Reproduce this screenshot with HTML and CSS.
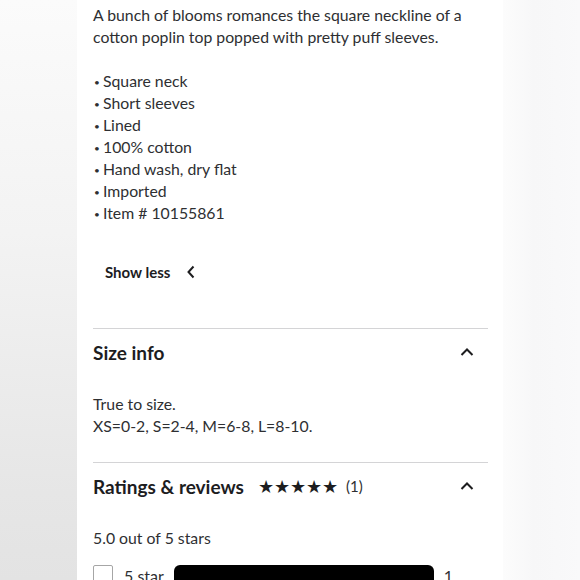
FILE: index.html
```html
<!DOCTYPE html>
<html>
<head>
<meta charset="utf-8">
<link rel="stylesheet" href="styles.css">
</head>
<body>
<div class="page">
  <div class="side side-left"></div>
  <main class="card">
    <section class="desc">
      <p class="text">A bunch of blooms romances the square neckline of a cotton poplin top popped with pretty puff sleeves.</p>
      <ul class="bullets">
        <li><span class="dot">•</span>Square neck</li>
        <li><span class="dot">•</span>Short sleeves</li>
        <li><span class="dot">•</span>Lined</li>
        <li><span class="dot">•</span>100% cotton</li>
        <li><span class="dot">•</span>Hand wash, dry flat</li>
        <li><span class="dot">•</span>Imported</li>
        <li><span class="dot">•</span>Item # 10155861</li>
      </ul>
      <button class="show-less">Show less
        <svg class="chev-left" width="10" height="14" viewBox="0 0 10 14"><path d="M7.5 1.5 L2.5 7 L7.5 12.5" fill="none" stroke="#1d1d1f" stroke-width="2"/></svg>
      </button>
    </section>
    <section class="panel">
      <div class="panel-head">
        <h2 class="panel-title">Size info</h2>
        <svg class="chev-up" width="14" height="10" viewBox="0 0 14 10"><path d="M1.5 8 L7 2.5 L12.5 8" fill="none" stroke="#1d1d1f" stroke-width="2"/></svg>
      </div>
      <div class="panel-body">
        <p class="text">True to size.<br>XS=0-2, S=2-4, M=6-8, L=8-10.</p>
      </div>
    </section>
    <section class="panel">
      <div class="panel-head">
        <div class="title-row">
          <h2 class="panel-title">Ratings &amp; reviews</h2>
          <span class="stars">★★★★★</span>
          <span class="count">(1)</span>
        </div>
        <svg class="chev-up" width="14" height="10" viewBox="0 0 14 10"><path d="M1.5 8 L7 2.5 L12.5 8" fill="none" stroke="#1d1d1f" stroke-width="2"/></svg>
      </div>
      <div class="panel-body">
        <p class="text">5.0 out of 5 stars</p>
        <div class="bar-row">
          <span class="checkbox"></span>
          <span class="bar-label">5 star</span>
          <span class="bar"></span>
          <span class="bar-count">1</span>
        </div>
      </div>
    </section>
  </main>
  <div class="side side-right"></div>
</div>
</body>
</html>
```
FILE: styles.css
```css
* { box-sizing: border-box; }
html, body { margin: 0; padding: 0; }
body {
  width: 580px;
  height: 580px;
  overflow: hidden;
  font-family: Lato, "Open Sans", sans-serif;
  color: #2e2f32;
  background: #fff;
}
.page {
  display: flex;
  height: 580px;
}
.side { flex: none; width: 77px; }
.side-left {
  background: linear-gradient(180deg, #fbfbfb 0%, #f3f3f3 40%, #e6e6e6 85%, #e3e3e3 100%);
}
.side-right {
  background: linear-gradient(90deg, #fcfcfc 0%, #f7f7f8 40%, #f9f9fa 100%);
}
.card {
  flex: none;
  width: 426px;
  background: #fff;
  padding: 0 15px 0 16px;
}
.text {
  margin: 0;
  font-size: 15.8px;
  line-height: 22px;
}
.desc { padding-top: 4px; }
.bullets {
  list-style: none;
  margin: 22px 0 0;
  padding: 0;
  font-size: 15.8px;
  line-height: 22px;
}
.bullets li { height: 22px; }
.dot {
  display: inline-block;
  width: 10px;
  padding-left: 1px;
  font-size: 10px;
  line-height: 10px;
  vertical-align: 1px;
}
.show-less {
  display: flex;
  align-items: center;
  gap: 16px;
  margin: 37px 0 0 12px;
  padding: 0;
  border: 0;
  background: none;
  font: 700 15px/22px Lato, sans-serif;
  color: #1d1d1f;
}
.panel {
  border-top: 1px solid #d4d4d6;
}
.desc + .panel { margin-top: 45px; }
.panel-head {
  display: flex;
  align-items: center;
  justify-content: space-between;
  height: 46px;
  padding-right: 14px;
}
.panel-title {
  margin: 0;
  font-size: 19px;
  font-weight: 700;
  color: #1d1d1f;
}
.title-row { display: flex; align-items: center; }
.stars {
  margin-left: 14px;
  font-size: 17.5px;
  color: #1d1d1f;
}
.count { margin-left: 8px; font-size: 15px; }
.panel-body { padding: 18px 0 25px; }
.bar-row {
  display: flex;
  align-items: flex-start;
  margin-top: 16px;
  height: 30px;
}
.checkbox {
  width: 20px;
  height: 20px;
  border: 1px solid #a6a6a6;
  border-radius: 2px;
}
.bar-label { margin-left: 11px; font-size: 16px; line-height: 22px; }
.bar {
  margin-left: 10px;
  width: 260px;
  height: 22px;
  background: #000;
  border-radius: 6px;
}
.bar-count { margin-left: 10px; font-size: 16px; line-height: 22px; }
```
